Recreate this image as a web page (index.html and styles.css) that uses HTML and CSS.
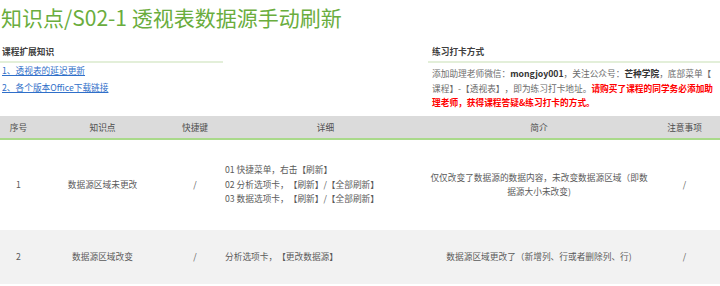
FILE: index.html
```html
<!DOCTYPE html>
<html lang="zh">
<head>
<meta charset="utf-8">
<link rel="stylesheet" href="styles.css">
</head>
<body>
<h1 class="title">知识点/S02-1 透视表数据源手动刷新</h1>
<div class="info">
  <section class="block block-left">
    <h2 class="block-title">课程扩展知识</h2>
    <a class="link" href="#">1、透视表的延迟更新</a>
    <a class="link" href="#">2、各个版本Office下载链接</a>
  </section>
  <section class="block block-right">
    <h2 class="block-title">练习打卡方式</h2>
    <p class="note">添加助理老师微信：<b>mongjoy001</b>，关注公众号：<b>芒种学院</b>，底部菜单【<br>课程】-【透视表】，即为练习打卡地址。<span class="warn">请购买了课程的同学务必添加助<br>理老师，获得课程答疑&amp;练习打卡的方式。</span></p>
  </section>
</div>
<table class="grid">
  <colgroup>
    <col class="c1"><col class="c2"><col class="c3"><col class="c4"><col class="c5"><col class="c6">
  </colgroup>
  <thead>
    <tr><th>序号</th><th>知识点</th><th>快捷键</th><th>详细</th><th>简介</th><th>注意事项</th></tr>
  </thead>
  <tbody>
    <tr class="r1">
      <td>1</td>
      <td>数据源区域未更改</td>
      <td>/</td>
      <td class="detail">01 快捷菜单，右击【刷新】<br>02 分析选项卡，【刷新】/【全部刷新】<br>03 数据选项卡，【刷新】/【全部刷新】</td>
      <td class="intro">仅仅改变了数据源的数据内容，未改变数据源区域（即数<br>据源大小未改变)</td>
      <td>/</td>
    </tr>
    <tr class="r2">
      <td>2</td>
      <td>数据源区域改变</td>
      <td>/</td>
      <td class="detail">分析选项卡，【更改数据源】</td>
      <td class="intro">数据源区域更改了（新增列、行或者删除列、行)</td>
      <td>/</td>
    </tr>
  </tbody>
</table>
</body>
</html>
```
FILE: styles.css
```css
html, body {
  margin: 0;
  padding: 0;
  background: #ffffff;
}
body {
  font-family: "Noto Sans CJK SC", "Noto Sans", sans-serif;
  font-size: 8.7px;
  color: #595959;
  width: 720px;
  overflow: hidden;
  text-spacing-trim: space-all;
}
.title {
  margin: 0;
  padding: 4px 0 0 1px;
  height: 40px;
  box-sizing: border-box;
  font-size: 21px;
  font-weight: normal;
  line-height: 26px;
  color: #6aad3d;
}
.info {
  display: flex;
  justify-content: space-between;
  height: 76px;
}
.block-left {
  width: 223px;
  padding-left: 2px;
  box-sizing: border-box;
}
.block-right {
  width: 292px;
  padding-left: 4px;
  box-sizing: border-box;
}
.block-title {
  margin: 0;
  font-size: 8.7px;
  font-weight: bold;
  color: #404040;
  line-height: 18px;
  padding-top: 3px;
  border-bottom: 2px solid #e3efd9;
}
.block-left .block-title {
  margin-left: -2px;
  padding-left: 2px;
  margin-bottom: -1px;
}
.block-right .block-title {
  margin-left: -4px;
  padding-left: 4px;
}
.link {
  display: block;
  color: #2f6fc9;
  text-decoration: underline;
  line-height: 17px;
}
.note {
  margin: 4px 0 0;
  line-height: 14.5px;
  color: #6b6b6b;
  white-space: nowrap;
}
.note b {
  color: #333333;
}
.warn {
  color: #ff0000;
  font-weight: bold;
}
.grid {
  width: 720px;
  border-collapse: collapse;
  table-layout: fixed;
}
.c1 { width: 37px; }
.c2 { width: 131px; }
.c3 { width: 54px; }
.c4 { width: 207px; }
.c5 { width: 220px; }
.c6 { width: 71px; }
.grid th {
  background: #dbdbdb;
  height: 22px;
  padding: 0;
  font-weight: normal;
  color: #4d4d4d;
  border-bottom: 2px solid #a9d98a;
  text-align: center;
}
.grid td {
  text-align: center;
  padding: 0;
  line-height: 14.5px;
  color: #5a5a5a;
}
.grid td.detail {
  text-align: left;
  padding-left: 3px;
}
.grid td.intro {
  white-space: nowrap;
}
.r1 td {
  height: 90px;
  background: #ffffff;
}
.r2 td {
  height: 54px;
  background: #f2f2f2;
}
```
